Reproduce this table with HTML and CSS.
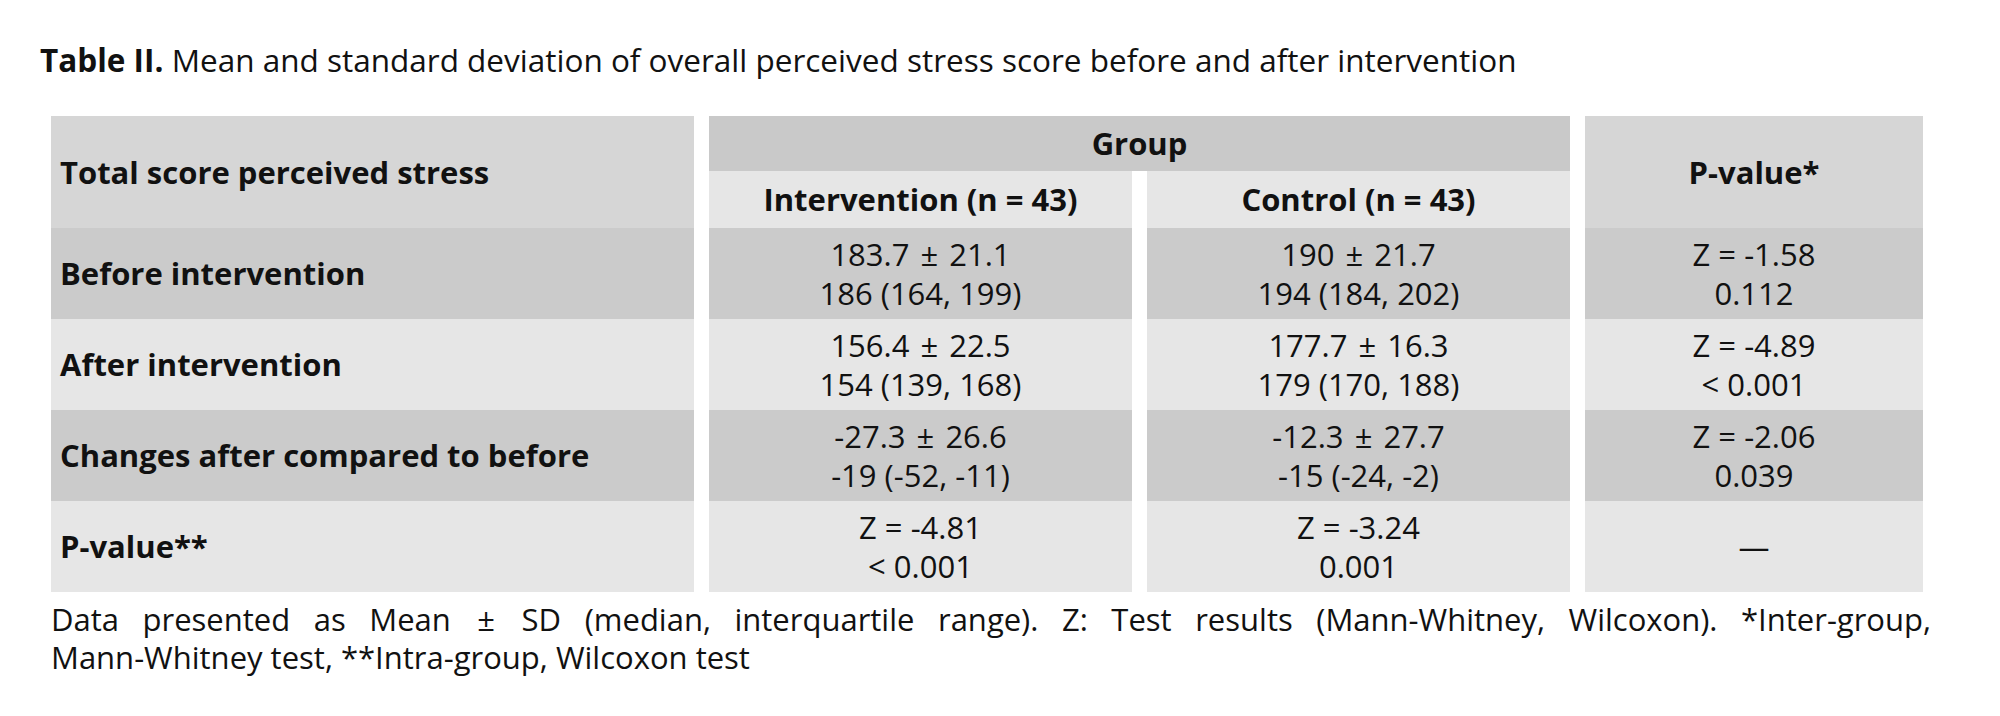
FILE: index.html
```html
<!DOCTYPE html>
<html lang="en">
<head>
<meta charset="utf-8">
<title>Table II</title>
<link rel="stylesheet" href="styles.css">
</head>
<body>
<div class="page">
  <p class="caption"><b>Table II.</b> Mean and standard deviation of overall perceived stress score before and after intervention</p>
  <div class="grid">
    <div class="cell label head-label">Total score perceived stress</div>
    <div class="cell head group">Group</div>
    <div class="cell head pval">P-value*</div>
    <div class="cell head sub">Intervention (n = 43)</div>
    <div class="cell head sub">Control (n = 43)</div>

    <div class="cell label dark">Before intervention</div>
    <div class="cell val dark"><p class="v">183.7 <span class="pm">±</span> 21.1<br>186 (164, 199)</p></div>
    <div class="cell val dark"><p class="v">190 <span class="pm">±</span> 21.7<br>194 (184, 202)</p></div>
    <div class="cell val dark"><p class="v">Z = -1.58<br>0.112</p></div>

    <div class="cell label light">After intervention</div>
    <div class="cell val light"><p class="v">156.4 <span class="pm">±</span> 22.5<br>154 (139, 168)</p></div>
    <div class="cell val light"><p class="v">177.7 <span class="pm">±</span> 16.3<br>179 (170, 188)</p></div>
    <div class="cell val light"><p class="v">Z = -4.89<br>&lt; 0.001</p></div>

    <div class="cell label dark">Changes after compared to before</div>
    <div class="cell val dark"><p class="v">-27.3 <span class="pm">±</span> 26.6<br>-19 (-52, -11)</p></div>
    <div class="cell val dark"><p class="v">-12.3 <span class="pm">±</span> 27.7<br>-15 (-24, -2)</p></div>
    <div class="cell val dark"><p class="v">Z = -2.06<br>0.039</p></div>

    <div class="cell label light">P-value**</div>
    <div class="cell val light"><p class="v">Z = -4.81<br>&lt; 0.001</p></div>
    <div class="cell val light"><p class="v">Z = -3.24<br>0.001</p></div>
    <div class="cell val light"><p class="v">—</p></div>
  </div>
  <div class="note">
    <p class="note-line first">Data presented as Mean <span class="pm">±</span> SD (median, interquartile range). Z: Test results (Mann-Whitney, Wilcoxon). *Inter-group,</p>
    <p class="note-line">Mann-Whitney test, **Intra-group, Wilcoxon test</p>
  </div>
</div>
</body>
</html>
```
FILE: styles.css
```css
html, body {
  margin: 0;
  padding: 0;
  background: #ffffff;
}
body {
  font-family: "Open Sans", Lato, "Liberation Sans", sans-serif;
  color: #111111;
  font-size: 31px;
}
.page {
  padding: 41px 0 0 40px;
  width: 1900px;
}
.caption {
  margin: 0;
  line-height: 38px;
  font-weight: 400;
  font-size: 31.5px;
}
.caption b {
  font-weight: 700;
}
.grid {
  margin: 37px 0 0 11px;
  display: grid;
  grid-template-columns: 643px 423px 423px 338px;
  grid-template-rows: 55px 57px 91px 91px 91px 91px;
  column-gap: 15px;
  width: 1887px;
}
.cell {
  display: flex;
  align-items: center;
  line-height: 39px;
}
.label {
  font-weight: 700;
  padding-left: 9px;
}
.head {
  font-weight: 700;
  justify-content: center;
}
.head-label {
  grid-row: 1 / span 2;
  grid-column: 1;
  background: #d6d6d6;
}
.group {
  grid-column: 2 / span 2;
  grid-row: 1;
  background: #c9c9c9;
}
.pval {
  grid-column: 4;
  grid-row: 1 / span 2;
  background: #d6d6d6;
}
.sub {
  background: #e6e6e6;
  grid-row: 2;
}
.val {
  justify-content: center;
}
.v {
  margin: 0;
  text-align: center;
}
.pm {
  display: inline-block;
  margin: 0 3px;
}
.dark {
  background: #cbcbcb;
}
.light {
  background: #e6e6e6;
}
.note {
  margin: 8px 0 0 11px;
  width: 1880px;
}
.note-line {
  margin: 0;
  line-height: 38px;
  text-align: justify;
}
.note-line.first {
  text-align-last: justify;
}
```
